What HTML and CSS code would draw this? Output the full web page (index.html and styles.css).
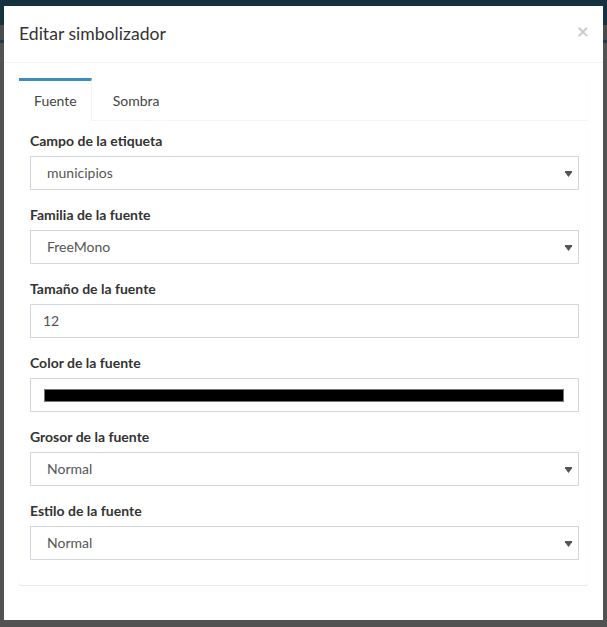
FILE: index.html
```html
<!DOCTYPE html>
<html lang="es">
<head>
<meta charset="utf-8">
<title>Editar simbolizador</title>
<link rel="stylesheet" href="styles.css">
</head>
<body>
<div class="page">
  <div class="modal">
    <div class="modal-header">
      <h4 class="modal-title">Editar simbolizador</h4>
      <span class="close">×</span>
    </div>
    <div class="modal-body">
      <div class="tabs-box">
        <ul class="nav-tabs">
          <li class="tab active">Fuente</li>
          <li class="tab">Sombra</li>
        </ul>
        <div class="tab-content">
          <div class="form-group">
            <div class="label">Campo de la etiqueta</div>
            <div class="control select"><span>municipios</span><svg class="caret" width="7" height="6" viewBox="0 0 7 6"><path d="M0 0H7V1.2L3.5 6L0 1.2Z" fill="#555"/></svg></div>
          </div>
          <div class="form-group">
            <div class="label">Familia de la fuente</div>
            <div class="control select"><span>FreeMono</span><svg class="caret" width="7" height="6" viewBox="0 0 7 6"><path d="M0 0H7V1.2L3.5 6L0 1.2Z" fill="#555"/></svg></div>
          </div>
          <div class="form-group">
            <div class="label">Tamaño de la fuente</div>
            <div class="control input"><span>12</span></div>
          </div>
          <div class="form-group">
            <div class="label">Color de la fuente</div>
            <div class="control color"><div class="swatch"></div></div>
          </div>
          <div class="form-group">
            <div class="label">Grosor de la fuente</div>
            <div class="control select"><span>Normal</span><svg class="caret" width="7" height="6" viewBox="0 0 7 6"><path d="M0 0H7V1.2L3.5 6L0 1.2Z" fill="#555"/></svg></div>
          </div>
          <div class="form-group">
            <div class="label">Estilo de la fuente</div>
            <div class="control select"><span>Normal</span><svg class="caret" width="7" height="6" viewBox="0 0 7 6"><path d="M0 0H7V1.2L3.5 6L0 1.2Z" fill="#555"/></svg></div>
          </div>
        </div>
      </div>
    </div>
  </div>
</div>
</body>
</html>
```

FILE: styles.css
```css
html, body {
  margin: 0;
  padding: 0;
}
body {
  height: 627px;
  overflow: hidden;
  font-family: Lato, "Open Sans", sans-serif;
  font-size: 14px;
  line-height: 20px;
  color: #333;
  background: linear-gradient(to bottom,
    #17323f 0, #17323f 25px,
    #4b4b4b 25px, #4b4b4b 40px,
    #1e3a4c 40px, #1e3a4c 43px,
    #525252 43px, #525252 100%);
}
.page {
  padding: 6px 4px 0 4px;
}
.modal {
  width: 599px;
  height: 614px;
  background: #fff;
  box-sizing: border-box;
}
.modal-header {
  display: flex;
  align-items: flex-start;
  justify-content: space-between;
  padding: 15px;
  border-bottom: 1px solid #f4f4f4;
}
.modal-title {
  margin: 0;
  font-size: 17.6px;
  font-weight: 400;
  line-height: 26px;
  color: #333;
}
.close {
  font-size: 21px;
  font-weight: 700;
  line-height: 20px;
  color: #000;
  opacity: 0.2;
  margin-right: -1px;
}
.modal-body {
  padding: 15px;
}
.tabs-box {
  background: #fff;
  box-shadow: 0 1px 1px rgba(0,0,0,0.1);
  border-radius: 3px;
}
.nav-tabs {
  list-style: none;
  margin: 0;
  padding: 0;
  display: flex;
  border-bottom: 1px solid #f4f4f4;
}
.tab {
  padding: 10px 14px;
  border-top: 3px solid transparent;
  margin-right: 7px;
  margin-bottom: -1px;
  color: #444;
  line-height: 20px;
}
.tab.active {
  padding-left: 15px;
  border-top-color: #3c8dbc;
  border-right: 1px solid #f4f4f4;
  background: #fff;
  color: #444;
  margin-right: 7px;
}
.tab-content {
  padding: 10px 9px 10px 11px;
}
.form-group {
  margin-bottom: 15px;
}
.label {
  font-weight: 700;
  margin-bottom: 5px;
  color: #333;
}
.control {
  height: 34px;
  box-sizing: border-box;
  border: 1px solid #d2d6de;
  display: flex;
  align-items: center;
  color: #555;
}
.select {
  padding: 0 6px 0 16px;
  justify-content: space-between;
}
.caret {
  display: block;
  margin-top: 1px;
}
.input {
  padding: 0 12px;
}
.color {
  padding: 0 14px 0 13px;
}
.swatch {
  flex: 1;
  height: 13px;
  box-sizing: border-box;
  background: #000;
  border: 1px solid #777;
}
```
